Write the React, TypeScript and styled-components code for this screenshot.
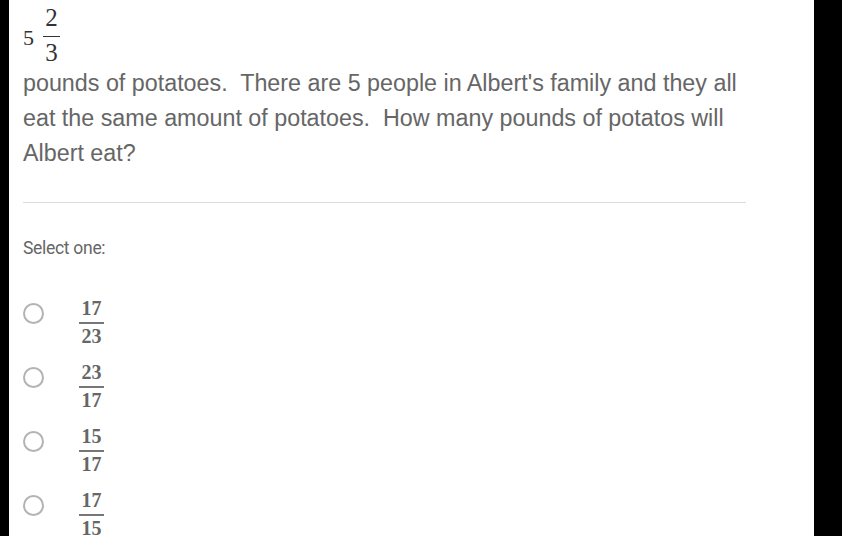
import React from 'react';
import styled, { createGlobalStyle } from 'styled-components';

const GlobalStyle = createGlobalStyle`
  html, body {
    margin: 0;
    padding: 0;
    background: #000;
    overflow: hidden;
  }
`;

const serif = `"Liberation Serif", "Times New Roman", Times, serif`;

const options = [
  { num: '17', den: '23' },
  { num: '23', den: '17' },
  { num: '15', den: '17' },
  { num: '17', den: '15' },
];

const App = () => {
  return (
    <>
      <GlobalStyle />
      <StyledFrame>
        <StyledEdge width={9} />
        <StyledPage>
          <StyledMixed>
            <StyledWhole>5</StyledWhole>
            <StyledFraction>
              <StyledBigDigit>2</StyledBigDigit>
              <StyledBar />
              <StyledBigDigit>3</StyledBigDigit>
            </StyledFraction>
          </StyledMixed>

          <StyledQuestion>
            pounds of potatoes.&nbsp; There are 5 people in Albert's family and they all
            eat the same amount of potatoes.&nbsp; How many pounds of potatos will
            Albert eat?
          </StyledQuestion>

          <StyledRule />

          <StyledPrompt>Select one:</StyledPrompt>

          <StyledOptions>
            {options.map((o, i) => (
              <StyledOption key={i}>
                <StyledRadio />
                <StyledAnswer>
                  <StyledSmallDigit>{o.num}</StyledSmallDigit>
                  <StyledSmallBar />
                  <StyledSmallDigit>{o.den}</StyledSmallDigit>
                </StyledAnswer>
              </StyledOption>
            ))}
          </StyledOptions>
        </StyledPage>
        <StyledEdge width={28} />
      </StyledFrame>
    </>
  );
};

export default App;

const StyledFrame = styled.div`
  display: flex;
  width: 842px;
  height: 536px;
  overflow: hidden;
`;

const StyledEdge = styled.div<{ width: number }>`
  flex: 0 0 ${({ width }) => width}px;
  background: #000;
`;

const StyledPage = styled.div`
  flex: 1;
  background: #fff;
  padding: 0 68px 0 14px;
`;

const StyledMixed = styled.div`
  display: flex;
  align-items: center;
  padding-top: 3px;
  height: 63px;
  color: #333;
`;

const StyledWhole = styled.span`
  font-family: ${serif};
  font-size: 22px;
  line-height: 22px;
  margin: 6px 9px 0 0;
`;

const StyledFraction = styled.div`
  display: flex;
  flex-direction: column;
  align-items: center;
  width: 17px;
`;

const StyledBigDigit = styled.span`
  font-family: ${serif};
  font-size: 25px;
  line-height: 25px;
`;

const StyledBar = styled.div`
  align-self: stretch;
  height: 1px;
  background: #333;
  margin: 6px 0 3px;
`;

const StyledQuestion = styled.p`
  margin: 0;
  font-family: "Liberation Sans", Arial, sans-serif;
  font-size: 23.3px;
  line-height: 35px;
  color: #666;
`;

const StyledRule = styled.hr`
  margin: 31px 0 0;
  border: none;
  border-top: 1px solid #ddd;
`;

const StyledPrompt = styled.div`
  margin-top: 34px;
  font-family: Roboto, "Liberation Sans", sans-serif;
  font-size: 17.5px;
  line-height: 22px;
  color: #666;
  letter-spacing: -0.3px;
`;

const StyledOptions = styled.div`
  margin-top: 39px;
  display: flex;
  flex-direction: column;
`;

const StyledOption = styled.div`
  display: flex;
  align-items: flex-start;
  height: 64px;
`;

const StyledRadio = styled.span`
  box-sizing: border-box;
  width: 21px;
  height: 21px;
  margin-top: 5px;
  border: 2px solid #b3b3b3;
  border-radius: 50%;
  flex-shrink: 0;
`;

const StyledAnswer = styled.div`
  display: flex;
  flex-direction: column;
  align-items: center;
  margin: 1px 0 0 35px;
  color: #666;
`;

const StyledSmallDigit = styled.span`
  font-family: ${serif};
  font-weight: bold;
  font-size: 20px;
  line-height: 19px;
`;

const StyledSmallBar = styled.div`
  width: 25px;
  height: 2px;
  background: #777;
  margin: 4px 0 3px;
`;
